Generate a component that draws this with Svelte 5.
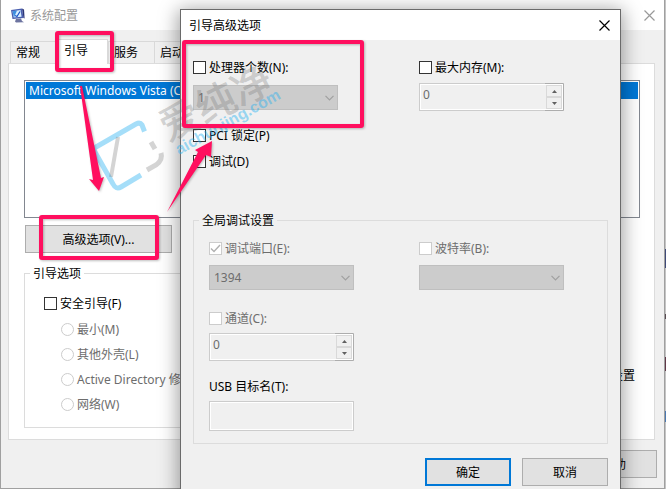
<script>
  const tabs = ['常规', '引导', '服务', '启动', '工具'];
  const modes = ['最小(M)', '其他外壳(L)', 'Active Directory 修复(P)', '网络(W)'];
  let active = $state('引导');
</script>

{#snippet cross()}
  <svg viewBox="0 0 11 11" width="11" height="11" aria-hidden="true">
    <path d="M.5 .5 10.5 10.5M10.5 .5 .5 10.5" fill="none" stroke="currentColor" stroke-width="1.2" />
  </svg>
{/snippet}

{#snippet combo(id, value)}
  <div class="combo">
    <select {id} disabled><option>{value}</option></select>
    <svg viewBox="0 0 9 6" width="9" height="6" aria-hidden="true">
      <path d="M.5 .8 4.5 4.8 8.5 .8" fill="none" stroke="#a0a0a0" stroke-width="1.2" />
    </svg>
  </div>
{/snippet}

{#snippet spinner(id)}
  <div class="spinner">
    <input {id} type="text" inputmode="numeric" value="0" disabled />
    <div class="steps">
      <button disabled aria-label="增加"><svg viewBox="0 0 5 3" width="5" height="3"><path d="M0 3 2.5 0 5 3z" /></svg></button>
      <button disabled aria-label="减少"><svg viewBox="0 0 5 3" width="5" height="3"><path d="M0 0 2.5 3 5 0z" /></svg></button>
    </div>
  </div>
{/snippet}

<div class="desktop">
  <main class="window">
    <header class="titlebar inactive">
      <svg class="app-icon" viewBox="0 0 15 15" width="15" height="15" aria-hidden="true">
        <path d="M1 2 12 .5 13.5 10 2.5 11z" fill="#4a5fb0" />
        <path d="M2.5 3.2 10.5 2 11.6 8.7 3.7 9.5z" fill="#d8efff" />
        <path d="M2.5 3.2 7 2.6 4 9.4z" fill="#3d8fe0" />
        <path d="M5 7.5 7 8.5 10 3.5" fill="none" stroke="#1b55c8" stroke-width="1.2" />
        <path d="M12 .5 14 1.5 14.6 10.5 13.5 10z" fill="#2b3577" />
        <path d="M6 11 11 10.5 12 13 14 14.2 6 14.6 5 13.4z" fill="#6d74a0" />
      </svg>
      <h1>系统配置</h1>
      <button class="close" aria-label="关闭系统配置">{@render cross()}</button>
    </header>

    <div class="tabs" role="tablist">
      {#each tabs as tab}
        <button role="tab" class:active={tab === active} aria-selected={tab === active} onclick={() => (active = tab)}>{tab}</button>
      {/each}
    </div>

    <section class="panel">
      <ul class="systems">
        <li>Microsoft Windows Vista (C:\Windows) : 当前 OS; 默认 OS</li>
      </ul>
      <button class="btn advanced">高级选项(V)...</button>
      <div class="options">
        <fieldset class="boot">
          <legend>引导选项</legend>
          <label><input type="checkbox" />安全引导(F)</label>
          <div class="modes">
            {#each modes as mode}
              <label class="off"><input type="radio" name="mode" disabled />{mode}</label>
            {/each}
          </div>
        </fieldset>
        <p class="permanent">使所有启动设置成为永久设置</p>
      </div>
    </section>

    <footer class="actions"><button class="btn">帮助</button></footer>
  </main>

  <div class="dialog" role="dialog" aria-labelledby="dialog-title">
    <header class="titlebar">
      <h2 id="dialog-title">引导高级选项</h2>
      <button class="close" aria-label="关闭引导高级选项">{@render cross()}</button>
    </header>
    <div class="body">
      <div class="pair">
        <div class="field">
          <label><input type="checkbox" />处理器个数(N):</label>
          {@render combo('cpus', '1')}
        </div>
        <div class="field">
          <label><input type="checkbox" />最大内存(M):</label>
          {@render spinner('memory')}
        </div>
      </div>
      <div class="checks">
        <label><input type="checkbox" />PCI 锁定(P)</label>
        <label><input type="checkbox" />调试(D)</label>
      </div>
      <fieldset class="debug">
        <legend>全局调试设置</legend>
        <div class="pair">
          <div class="field">
            <label class="off"><input type="checkbox" checked disabled />调试端口(E):</label>
            {@render combo('port', '1394')}
          </div>
          <div class="field">
            <label class="off"><input type="checkbox" disabled />波特率(B):</label>
            {@render combo('baud', '')}
          </div>
        </div>
        <div class="field">
          <label class="off"><input type="checkbox" disabled />通道(C):</label>
          {@render spinner('channel')}
        </div>
        <div class="field target">
          <label for="usb">USB 目标名(T):</label>
          <input id="usb" class="text" type="text" disabled />
        </div>
      </fieldset>
      <div class="buttons">
        <button class="btn primary">确定</button>
        <button class="btn">取消</button>
      </div>
    </div>
  </div>

  <svg class="marks" viewBox="0 0 666 489" width="666" height="489" aria-hidden="true">
    <g fill="none" stroke="#28b0f0" stroke-opacity=".42" stroke-width="5" stroke-linejoin="round">
      <path d="M144.500 131.500 142 125Q140 122 136 124L96 147Q93 149 95 152L113 184Q116 190 121 187L141 175" />
    </g>
    <g fill="none" stroke="#707070" stroke-opacity=".3">
      <path d="M118 137 111 177" stroke-width="4" />
      <path d="M151 142 155 149" stroke-width="5" />
      <path d="M161 153Q163 160 156 165L147 170" stroke-width="5" />
    </g>
    <text class="brand" transform="translate(168 142) rotate(-26)">爱纯净</text>
    <text class="site" transform="translate(179 155) rotate(-29)">aichunjing.com</text>
    <g class="red">
      <rect x="57" y="33" width="55" height="37" rx="1" />
      <rect x="41" y="217" width="116" height="41" rx="1" />
      <rect x="184" y="42" width="178" height="84" rx="1" />
      <path d="M80 86 82 86 101 178 104 177 99 191 89 179 93 180z" />
      <path d="M167 212 198 152 195 150 212 141 211 157 206 155z" />
    </g>
  </svg>
</div>

<style>
  :global(body) { margin: 0; }
  .desktop {
    position: relative;
    overflow: hidden;
    min-height: 100vh;
    padding-right: 1px;
    box-sizing: border-box;
    font: 12px/17px "Noto Sans", "Noto Sans CJK SC", sans-serif;
    color: #000;
    background: linear-gradient(#c4c4c4 249px, #3f4a78 249px 268px, #c4c4c4 268px 314px, #574a50 314px 319px, #c4c4c4 319px 357px, #603848 357px 371px, #c4c4c4 371px 411px, #4a78b0 411px 422px, #c4c4c4 422px);
  }
  button, input, select { font: inherit; color: inherit; margin: 0; box-sizing: border-box; }
  h1, h2, p, ul { margin: 0; padding: 0; font: inherit; }
  fieldset { margin: 0; min-width: 0; border: 1px solid #dcdcdc; box-sizing: border-box; }
  legend { padding: 0 3px; height: 17px; }

  .window { border: 1px solid #a0a0a0; border-top: 0; background: #f0f0f0; }
  .titlebar { display: flex; align-items: center; height: 30px; padding: 0 10px 0 8px; background: #fff; }
  .titlebar.inactive { padding: 0 9px; color: #999; }
  .titlebar h1 { margin-left: 5px; }
  .close { margin-left: auto; border: 0; padding: 0; background: none; display: flex; }

  .tabs { display: flex; align-items: flex-end; height: 24px; padding: 9px 9px 0; }
  .tabs button {
    width: 46px; height: 22px; padding: 0 0 0 5px; border: 1px solid #d9d9d9; border-width: 1px 0 0 1px;
    background: #f0f0f0; white-space: nowrap; text-align: left;
  }
  .tabs button.active { width: 52px; height: 25px; margin-bottom: -1px; padding: 0 0 4px 7px; background: #fff; border-right-width: 1px; position: relative; }

  .panel { margin: 0 9px 0 7px; padding: 16px 14px 11px 15px; border: 1px solid #dcdcdc; background: #fff; }
  .systems { height: 138px; box-sizing: border-box; padding: 1px; border: 1px solid #828790; list-style: none; }
  .systems li { padding: 0 3px; background: #0078d7; color: #fff; white-space: nowrap; overflow: hidden; }
  .btn { width: 86px; height: 28px; padding: 0; border: 1px solid #adadad; background: #e1e1e1; }
  .btn.primary { border: 2px solid #0078d7; }
  .btn.advanced { display: block; width: 147px; margin: 7px 0 0 1px; }
  .options { display: flex; gap: 16px; margin-top: 12px; }
  .boot { flex: 1; padding: 13px 19px 14px; }
  .boot legend { margin-left: -14px; }
  .permanent { width: 180px; padding: 102px 5px 0 0; text-align: right; white-space: nowrap; }
  .modes { display: grid; gap: 8px; margin: 9px 0 0 17px; }
  .actions { display: flex; justify-content: flex-end; padding: 10px 7px; }

  label { display: flex; align-items: center; gap: 3px; white-space: nowrap; }
  .off { color: #6d6d6d; }
  input[type="checkbox"], input[type="radio"] { appearance: none; flex: none; width: 13px; height: 13px; border: 1px solid #333; background: #fff; }
  input[type="radio"] { border-radius: 50%; }
  input[type="checkbox"]:disabled, input[type="radio"]:disabled { border-color: #ccc; }
  input[type="checkbox"]:checked {
    background: #fff url("data:image/svg+xml,%3Csvg xmlns='http://www.w3.org/2000/svg' viewBox='0 0 11 11'%3E%3Cpath d='M1 5.500 4 8.500 10 2' fill='none' stroke='%23b0b0b0' stroke-width='1.400'/%3E%3C/svg%3E");
  }

  .dialog {
    position: absolute; top: 9px; left: 180px; right: 45px;
    border: 1px solid #6a6a6a; background: #f0f0f0;
    box-shadow: 0 3px 18px 2px rgba(0, 0, 0, .38);
  }
  .body { padding: 19px 12px 12px; }
  .pair { display: flex; gap: 81px; }
  .field { width: 145px; display: flex; flex-direction: column; gap: 7px; }
  .combo { position: relative; display: flex; margin: 2px 0 1px; }
  .combo select { appearance: none; width: 100%; height: 25px; padding: 0 4px; border: 1px solid #bfbfbf; border-radius: 0; background: #ccc; color: #6d6d6d; opacity: 1; }
  .combo svg { position: absolute; right: 4px; top: 10px; }
  .spinner { display: flex; height: 28px; box-sizing: border-box; border: 1px solid #ccc; border-right-color: #adadad; background: #f0f0f0; box-shadow: inset 0 0 0 1px #fff; }
  .spinner input { flex: 1; min-width: 0; padding: 0 3px 5px; border: 0; background: none; color: #6d6d6d; }
  .steps { display: flex; flex-direction: column; width: 16px; padding: 1px; margin: -1px 0; border: solid #adadad; border-width: 1px 0; }
  .steps button { flex: 1; min-height: 0; padding: 0; border: 1px solid #d9d9d9; background: #f0f0f0; display: flex; align-items: center; justify-content: center; }
  .steps svg { fill: #606060; }
  .checks { display: grid; gap: 9px; margin: 16px 0 42px; }
  .debug { padding: 11px 15px 12px; }
  .debug legend { margin-left: -10px; }
  .debug .field { gap: 6px; }
  .debug .pair { gap: 65px; margin-bottom: 19px; }
  .debug .target { margin-top: 17px; }
  .text { height: 30px; padding: 0 4px; border: 1px solid #ccc; background: #f0f0f0; box-shadow: inset 0 0 0 1px #fff; }
  .buttons { display: flex; justify-content: flex-end; gap: 11px; margin-top: 14px; }

  .marks { position: absolute; top: 0; left: 0; pointer-events: none; }
  .brand { font: 500 40px "Noto Sans CJK SC", sans-serif; fill: #707070; fill-opacity: .3; }
  .site { font: bold 16px "Liberation Sans", sans-serif; fill: #28b0f0; fill-opacity: .45; }
  .red { filter: drop-shadow(1px 1px 1px rgba(0, 0, 0, .25)); }
  .red rect { fill: none; stroke: #ff0f5f; stroke-width: 4; }
  .red path { fill: #ff0f5f; }
</style>
